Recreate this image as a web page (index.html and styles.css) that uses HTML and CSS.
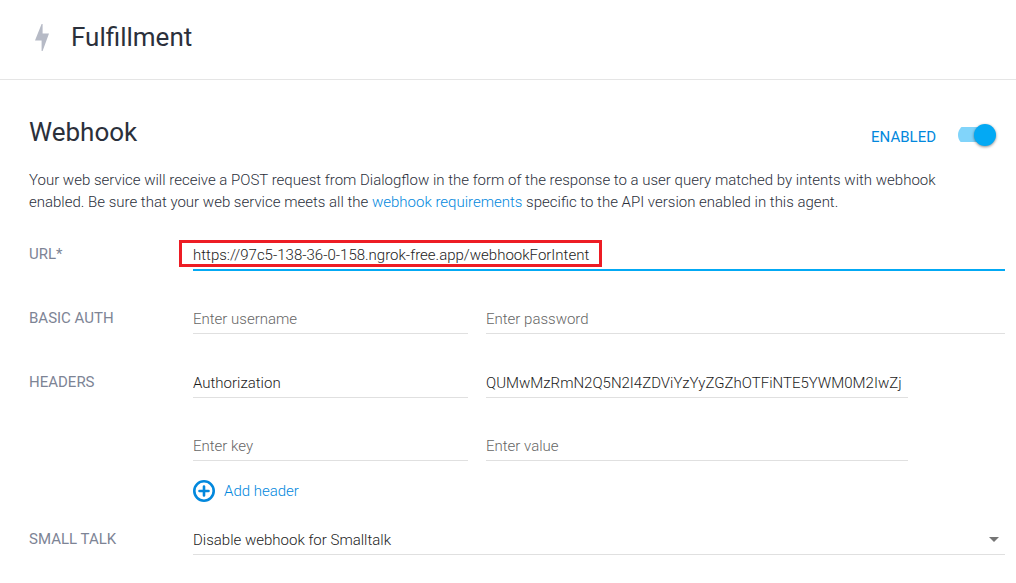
FILE: index.html
```html
<!DOCTYPE html>
<html lang="en">
<head>
<meta charset="utf-8">
<meta name="viewport" content="width=device-width, initial-scale=1">
<title>Fulfillment</title>
<link rel="stylesheet" href="styles.css">
</head>
<body>
<header class="topbar">
  <svg class="bolt" viewBox="0 0 14 27" aria-hidden="true"><path d="M6.6 0H7.6V9.6H14L7.6 27H6.6V16.4H0Z"/></svg>
  <h1 class="title">Fulfillment</h1>
</header>
<main class="content">
  <div class="section-head">
    <h2 class="title">Webhook</h2>
    <label class="switch">
      <span class="switch-text">ENABLED</span>
      <input class="switch-input" type="checkbox" role="switch" checked>
    </label>
  </div>
  <p class="intro">Your web service will receive a POST request from Dialogflow in the form of the response to a user query matched by intents with webhook enabled. Be sure that your web service meets all the <a class="link" href="#requirements">webhook requirements</a> specific to the API version enabled in this agent.</p>

  <form class="form">
    <div class="row">
      <label class="label" for="url">URL*</label>
      <div class="url-field">
        <input class="input input-active" id="url" type="text" value="https://97c5-138-36-0-158.ngrok-free.app/webhookForIntent">
        <span class="highlight"></span>
      </div>
    </div>
    <div class="row">
      <label class="label" for="username">BASIC AUTH</label>
      <div class="pair">
        <input class="input" id="username" type="text" placeholder="Enter username">
        <input class="input" type="password" placeholder="Enter password" aria-label="Password">
      </div>
    </div>
    <div class="row">
      <label class="label" for="key1">HEADERS</label>
      <div class="headers">
        <div class="pair pair-removable">
          <input class="input" id="key1" type="text" value="Authorization">
          <input class="input" type="text" value="QUMwMzRmN2Q5N2I4ZDViYzYyZGZhOTFiNTE5YWM0M2IwZj" aria-label="Header value">
        </div>
        <div class="pair pair-removable">
          <input class="input" type="text" placeholder="Enter key" aria-label="Header key">
          <input class="input" type="text" placeholder="Enter value" aria-label="Header value">
        </div>
        <button class="add" type="button">
          <svg class="add-icon" viewBox="0 0 22 22" aria-hidden="true"><circle cx="11" cy="11" r="9.7"/><path d="M11 6.5v9M6.5 11h9" stroke-linecap="round"/></svg>
          Add header
        </button>
      </div>
    </div>
    <div class="row row-select">
      <label class="label" for="smalltalk">SMALL TALK</label>
      <div class="select-wrap">
        <select class="input select" id="smalltalk">
          <option>Disable webhook for Smalltalk</option>
        </select>
        <svg class="caret" viewBox="0 0 10 5" aria-hidden="true"><path d="M0 0h10L5 5z"/></svg>
      </div>
    </div>
  </form>
</main>
</body>
</html>
```
FILE: styles.css
```css
* {
  box-sizing: border-box;
}

body {
  margin: 0;
  background: #fff;
  color: #2b303b;
  font-family: Roboto, "Open Sans", sans-serif;
  font-size: 15px;
  font-weight: 300;
  line-height: 22px;
}

.topbar {
  display: flex;
  align-items: center;
  gap: 22px;
  padding: 20px 35px 24px;
  border-bottom: 1px solid #e5e5e5;
}

.bolt {
  width: 14px;
  height: 27px;
  fill: #b6bac6;
}

.title {
  margin: 0;
  font-size: 26px;
  font-weight: 400;
  line-height: 35px;
}

.content {
  padding: 35px 11px 28px 29px;
}

.section-head {
  display: flex;
  align-items: center;
  justify-content: space-between;
  padding-right: 9px;
}

.switch {
  display: flex;
  align-items: center;
  gap: 22px;
  padding-top: 8px;
  color: #0288dd;
  font-weight: 400;
}

.switch-input {
  appearance: none;
  display: flex;
  align-items: center;
  width: 38px;
  height: 22px;
  margin: 0 0 4px;
  background: linear-gradient(#81d4fa, #81d4fa) left center / 30px 15px no-repeat;
  border-radius: 11px;
}

.switch-input::before {
  content: "";
  width: 22px;
  height: 22px;
  border-radius: 50%;
  background: #03a9f4;
  box-shadow: 0 1px 3px rgba(0, 0, 0, 0.45);
}

.switch-input:checked::before {
  margin-left: auto;
}

.intro {
  margin: 19px 0 25px;
  padding-right: 30px;
}

.link {
  color: #0288dd;
  text-decoration: none;
}

.form {
  display: flex;
  flex-direction: column;
  gap: 32px;
}

.row {
  display: grid;
  grid-template-columns: 164px minmax(0, 1fr);
  align-items: start;
}

.row-select {
  margin-top: -11px;
}

.label {
  color: #7d8495;
  font-weight: 400;
  line-height: 32px;
}

.input {
  display: block;
  width: 100%;
  min-width: 0;
  height: 32px;
  padding: 2px 0 0;
  border: 0;
  border-bottom: 1px solid #e0e0e0;
  border-radius: 0;
  outline: 0;
  background: transparent;
  color: #1c1c1c;
  font: inherit;
}

.input::placeholder {
  color: #666;
  opacity: 1;
}

.input-active {
  border-bottom-color: #03a9f4;
  box-shadow: 0 1px 0 #03a9f4;
}

.url-field {
  position: relative;
}

.highlight {
  position: absolute;
  top: 2px;
  left: -14px;
  width: 423px;
  height: 27px;
  border: 3px solid #ed1c24;
  pointer-events: none;
}

.pair {
  display: grid;
  grid-template-columns: 275px minmax(0, 1fr);
  gap: 18px;
}

.pair-removable {
  padding-right: 97px;
}

.headers {
  display: grid;
  row-gap: 31px;
}

.add {
  display: flex;
  align-items: center;
  justify-self: start;
  gap: 9px;
  margin-top: -12px;
  padding: 0;
  border: 0;
  background: none;
  color: #0288dd;
  font: inherit;
}

.add-icon {
  width: 22px;
  height: 22px;
  fill: none;
  stroke: #0288dd;
  stroke-width: 2.6;
}

.select-wrap {
  display: grid;
  align-items: center;
}

.select,
.caret {
  grid-area: 1 / 1;
}

.select {
  appearance: none;
}

.caret {
  justify-self: end;
  width: 10px;
  height: 5px;
  margin-right: 6px;
  fill: #757575;
  pointer-events: none;
}
```
